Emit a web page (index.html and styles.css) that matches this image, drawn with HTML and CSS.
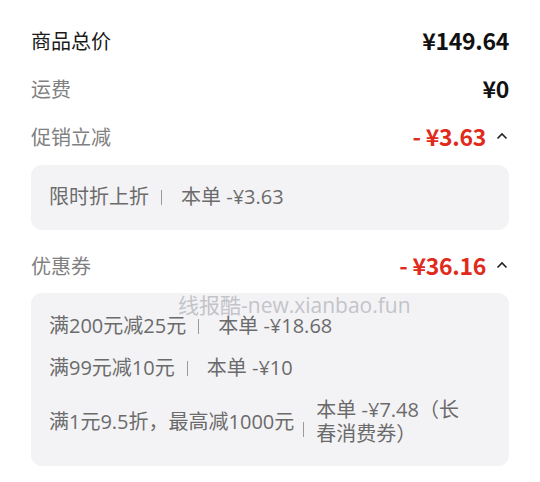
FILE: index.html
```html
<!DOCTYPE html>
<html lang="zh-CN">
<head>
  <meta charset="UTF-8">
  <title>订单金额</title>
  <link rel="stylesheet" href="styles.css">
</head>
<body>
  <div class="resumo">
    <div class="linha">
      <span class="rotulo escuro">商品总价</span>
      <span class="valor">¥149.64</span>
    </div>
    <div class="linha">
      <span class="rotulo">运费</span>
      <span class="valor">¥0</span>
    </div>
    <div class="linha">
      <span class="rotulo">促销立减</span>
      <span class="valor vermelho">- ¥3.63
        <svg class="seta" width="12" height="8" viewBox="0 0 12 8"><path d="M1.5 6.5 L6 2 L10.5 6.5" fill="none" stroke="#222" stroke-width="1.6"/></svg>
      </span>
    </div>
    <div class="caixa">
      <div class="item">
        <span>限时折上折</span>
        <i class="sep"></i>
        <span class="direita">本单 -¥3.63</span>
      </div>
    </div>

    <div class="linha linha-cupom">
      <span class="rotulo">优惠券</span>
      <span class="valor vermelho">- ¥36.16
        <svg class="seta" width="12" height="8" viewBox="0 0 12 8"><path d="M1.5 6.5 L6 2 L10.5 6.5" fill="none" stroke="#222" stroke-width="1.6"/></svg>
      </span>
    </div>
    <div class="caixa cupons">
      <div class="marca">线报酷-new.xianbao.fun</div>
      <div class="item">
        <span>满200元减25元</span>
        <i class="sep"></i>
        <span class="direita">本单 -¥18.68</span>
      </div>
      <div class="item">
        <span>满99元减10元</span>
        <i class="sep"></i>
        <span class="direita">本单 -¥10</span>
      </div>
      <div class="item">
        <span>满1元9.5折，最高减1000元</span>
        <i class="sep baixo"></i>
        <span class="direita">本单 -¥7.48（长春消费券）</span>
      </div>
    </div>
  </div>
</body>
</html>
```

FILE: styles.css
```css
body {
  margin: 0;
  background-color: #fff;
  font-family: "Noto Sans CJK SC", "Noto Sans", sans-serif;
}
.resumo {
  padding: 16px 31px 0 31px;
}
.linha {
  display: flex;
  justify-content: space-between;
  align-items: center;
  height: 48px;
}
.rotulo {
  font-size: 20px;
  color: #808080;
}
.rotulo.escuro {
  color: #1a1a1a;
}
.valor {
  display: flex;
  align-items: center;
  font-size: 23px;
  font-weight: bold;
  color: #111;
  letter-spacing: -0.3px;
}
.vermelho {
  color: #e02a1b;
}
.seta {
  margin-left: 10px;
  margin-right: 1px;
}
.caixa {
  margin-top: 5px;
  background-color: #f3f3f6;
  border-radius: 11px;
  padding: 20px 18px 21px 18px;
}
.linha-cupom {
  margin-top: 11px;
}
.cupons {
  position: relative;
  margin-top: 4px;
  padding: 21px 36px 20px 18px;
  display: flex;
  flex-direction: column;
  gap: 18px;
}
.item {
  display: flex;
  align-items: center;
  font-family: "Open Sans", "Noto Sans CJK SC", sans-serif;
  font-size: 20px;
  line-height: 24px;
  color: #6b6b6b;
}
.sep {
  flex: none;
  width: 1px;
  height: 15px;
  margin: 0 19px 0 12px;
  background-color: #9a9a9a;
}
.sep.baixo {
  margin-top: 14px;
  margin-left: 9px;
  margin-right: 12px;
}
.direita {
  flex: 1;
}
.marca {
  position: absolute;
  top: 0;
  left: 147px;
  font-family: "Open Sans", "Noto Sans CJK SC", sans-serif;
  font-size: 21px;
  line-height: 24px;
  color: #c4c4c8;
}
```
